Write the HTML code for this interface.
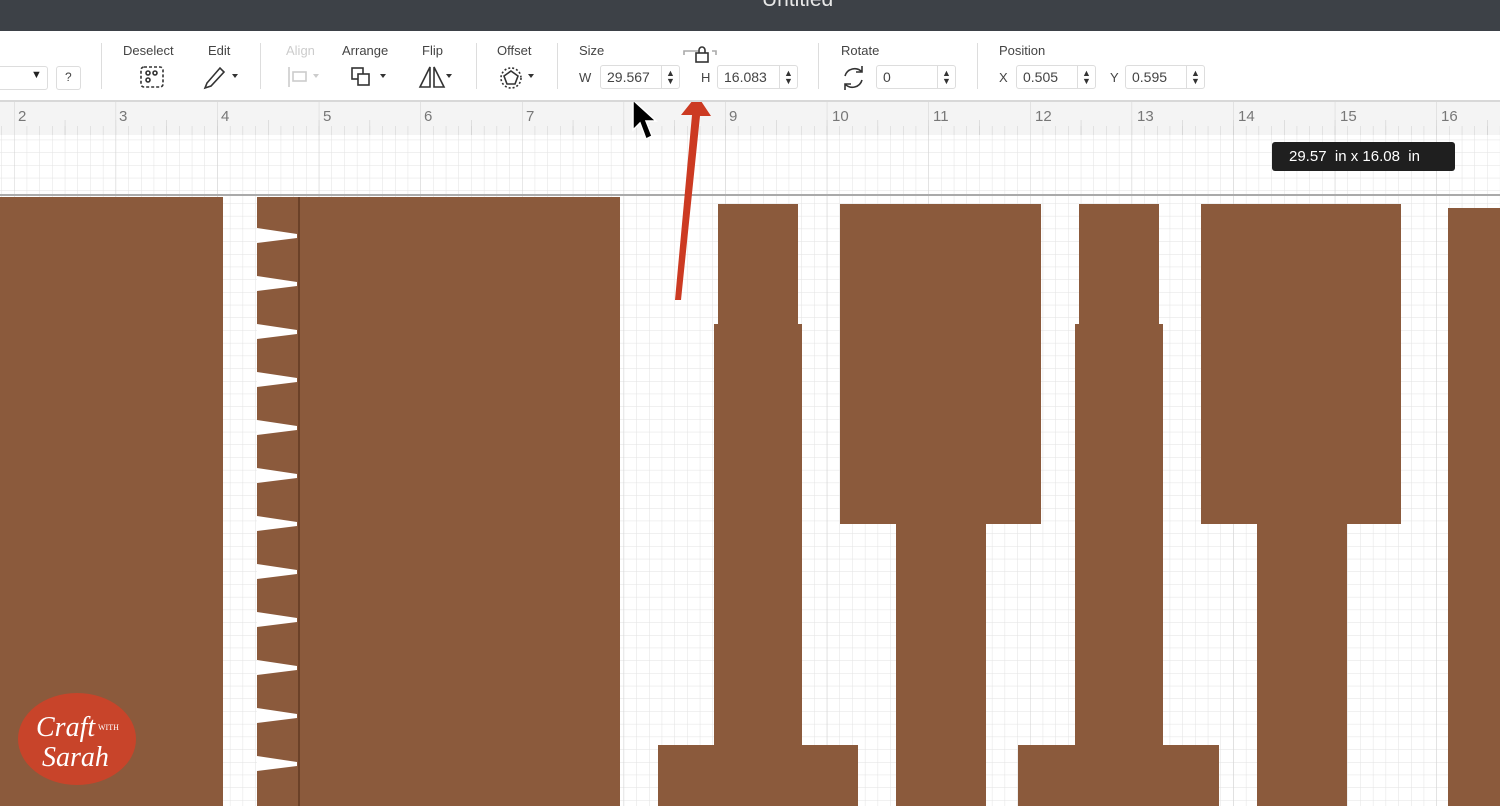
<!DOCTYPE html>
<html><head><meta charset="utf-8"><style>
*{margin:0;padding:0;box-sizing:border-box}
body{width:1500px;height:806px;overflow:hidden;position:relative;background:#fff;font-family:"Liberation Sans",sans-serif;color:#444}
.top{position:absolute;left:0;top:0;width:1500px;height:31px;background:#3d4147}
.top span{position:absolute;left:762px;top:-12px;color:#e8e8e8;font-size:21px}
.tb{position:absolute;left:0;top:31px;width:1500px;height:71px;background:#fff;border-bottom:2px solid #d8d8d8}
.lb{position:absolute;font-size:13px;color:#444}
.sep{position:absolute;top:12px;width:1px;height:46px;background:#ddd}
.inp{position:absolute;height:24px;border:1px solid #ddd;border-radius:3px;font-size:14px;color:#444;padding:3px 0 0 6px;background:#fff}
.inp i{position:absolute;right:0;top:0;width:18px;height:22px;border-left:1px solid #ddd;font-style:normal;font-size:9px;line-height:8px;text-align:center;padding-top:3px;color:#333}
.tip{position:absolute;left:1272px;top:142px;width:183px;height:29px;background:#1f1f1f;border-radius:3px;color:#fff;font-size:15px;padding:6px 0 0 17px}
</style></head><body>
<svg width="1500" height="806" style="position:absolute;left:0;top:0">
<defs>
<pattern id="g" x="14" y="0" width="12.7" height="12.7" patternUnits="userSpaceOnUse"><path d="M0 0V12.7M0 0H12.7" stroke="#e2e2e2" stroke-width="1" fill="none"/></pattern>
<pattern id="G" x="14" y="0" width="101.6" height="101.6" patternUnits="userSpaceOnUse"><path d="M0 0V101.6" stroke="#d0d0d0" stroke-width="1" fill="none"/></pattern>
<pattern id="t" x="14" y="102" width="12.7" height="33" patternUnits="userSpaceOnUse"><path d="M0 24V33" stroke="#cfcfcf" stroke-width="1" fill="none"/></pattern>
<pattern id="t2" x="14" y="102" width="50.8" height="33" patternUnits="userSpaceOnUse"><path d="M0 18V33" stroke="#c8c8c8" stroke-width="1" fill="none"/></pattern>
</defs>
<rect x="0" y="102" width="1500" height="704" fill="#fff"/>
<rect x="0" y="102" width="1500" height="33" fill="#f4f4f4"/>
<rect x="0" y="102" width="1500" height="33" fill="url(#t)"/>
<rect x="0" y="102" width="1500" height="33" fill="url(#t2)"/>
<rect x="0" y="135" width="1500" height="671" fill="url(#g)"/>
<rect x="0" y="102" width="1500" height="704" fill="url(#G)"/>
<line x1="0" y1="195" x2="1500" y2="195" stroke="#aaa" stroke-width="2"/>
<g font-size="15" fill="#777">
<text x="18" y="121">2</text><text x="119" y="121">3</text><text x="221" y="121">4</text><text x="323" y="121">5</text><text x="424" y="121">6</text><text x="526" y="121">7</text><text x="729" y="121">9</text><text x="832" y="121">10</text><text x="933" y="121">11</text><text x="1035" y="121">12</text><text x="1137" y="121">13</text><text x="1238" y="121">14</text><text x="1340" y="121">15</text><text x="1441" y="121">16</text>
</g>
<g fill="#8b5a3c">
<rect x="0" y="197" width="223" height="609"/>
<rect x="300" y="197" width="320" height="609"/>
<path d="M718 204H798V324H802V745H858V806H658V745H714V324H718Z"/>
<path d="M840 204H1041V524H986V806H896V524H840Z"/>
<path d="M1079 204H1159V324H1163V745H1219V806H1018V745H1075V324H1079Z"/>
<path d="M1201 204H1401V524H1347V806H1257V524H1201Z"/>
<rect x="1448" y="208" width="52" height="598"/>
<path d="M257 197H299V806H257Z"/>
</g>
<line x1="299" y1="197" x2="299" y2="806" stroke="#6b4128" stroke-width="2"/>
<g fill="#fff">
<path d="M257 228L297 234L297 238L257 243Z"/>
<path d="M257 276L297 282L297 286L257 291Z"/>
<path d="M257 324L297 330L297 334L257 339Z"/>
<path d="M257 372L297 378L297 382L257 387Z"/>
<path d="M257 420L297 426L297 430L257 435Z"/>
<path d="M257 468L297 474L297 478L257 483Z"/>
<path d="M257 516L297 522L297 526L257 531Z"/>
<path d="M257 564L297 570L297 574L257 579Z"/>
<path d="M257 612L297 618L297 622L257 627Z"/>
<path d="M257 660L297 666L297 670L257 675Z"/>
<path d="M257 708L297 714L297 718L257 723Z"/>
<path d="M257 756L297 762L297 766L257 771Z"/>
</g>
<path d="M675 300L681 300L700 116L711 116L697 95L681 115L692 115Z" fill="#cc3a22"/>
<path d="M633 100L633 130L640 123L646 139L652 136L646 121L656 121Z" fill="#000" stroke="#fff" stroke-width="1.5"/>
<ellipse cx="77" cy="739" rx="59" ry="46" fill="#c8442a"/>
<text x="36" y="736" fill="#fff" font-family="Liberation Serif,serif" font-style="italic" font-size="28">Craft</text>
<text x="98" y="730" fill="#fff" font-family="Liberation Serif,serif" font-size="8">WITH</text>
<text x="42" y="766" fill="#fff" font-family="Liberation Serif,serif" font-style="italic" font-size="28">Sarah</text>
</svg>
<div class="top"><span>Untitled</span></div>
<div class="tb">
<div class="inp" style="left:-5px;top:35px;width:53px"></div><span style="position:absolute;left:31px;top:38px;font-size:11px;color:#222">▼</span>
<div class="inp" style="left:56px;top:35px;width:25px;padding-left:8px;font-size:12px">?</div>
<div class="sep" style="left:101px"></div>
<span class="lb" style="left:123px;top:12px">Deselect</span>
<span class="lb" style="left:208px;top:12px">Edit</span>
<div class="sep" style="left:260px"></div>
<span class="lb" style="left:286px;top:12px;color:#ccc">Align</span>
<span class="lb" style="left:342px;top:12px">Arrange</span>
<span class="lb" style="left:422px;top:12px">Flip</span>
<div class="sep" style="left:476px"></div>
<span class="lb" style="left:497px;top:12px">Offset</span>
<div class="sep" style="left:557px"></div>
<span class="lb" style="left:579px;top:12px">Size</span>
<span class="lb" style="left:579px;top:39px">W</span>
<div class="inp" style="left:600px;top:34px;width:80px">29.567<i>▲<br>▼</i></div>
<span class="lb" style="left:701px;top:39px">H</span>
<div class="inp" style="left:717px;top:34px;width:81px">16.083<i>▲<br>▼</i></div>
<div class="sep" style="left:818px"></div>
<span class="lb" style="left:841px;top:12px">Rotate</span>
<div class="inp" style="left:876px;top:34px;width:80px">0<i>▲<br>▼</i></div>
<div class="sep" style="left:977px"></div>
<span class="lb" style="left:999px;top:12px">Position</span>
<span class="lb" style="left:999px;top:39px">X</span>
<div class="inp" style="left:1016px;top:34px;width:80px">0.505<i>▲<br>▼</i></div>
<span class="lb" style="left:1110px;top:39px">Y</span>
<div class="inp" style="left:1125px;top:34px;width:80px">0.595<i>▲<br>▼</i></div>
<svg width="1500" height="71" style="position:absolute;left:0;top:0" fill="none" stroke="#333" stroke-width="1.6">
<rect x="141" y="36" width="22" height="20" rx="3" stroke-dasharray="3 2"/>
<circle cx="148" cy="42" r="2"/><circle cx="155" cy="42" r="2"/><circle cx="148" cy="49" r="2"/>
<path d="M208 56L205 57L207 52L220 37L224 41L211 55Z"/>
<path d="M232 43h6l-3 4z" fill="#333" stroke="none"/>
<path d="M289 36V56" stroke="#ccc"/><rect x="293" y="41" width="13" height="9" stroke="#ccc"/><path d="M313 43h6l-3 4z" fill="#ccc" stroke="none"/>
<rect x="352" y="37" width="11" height="11"/><rect x="358" y="43" width="11" height="11" fill="#fff"/>
<path d="M380 43h6l-3 4z" fill="#333" stroke="none"/>
<path d="M430 36L420 56H430Z M434 36L444 56H434Z"/>
<path d="M446 43h6l-3 4z" fill="#333" stroke="none"/>
<circle cx="511" cy="47" r="10" stroke-dasharray="2 2"/><path d="M511 40L518 45L515 53H507L504 45Z"/>
<path d="M528 43h6l-3 4z" fill="#333" stroke="none"/>
<path d="M684 24V20h14M712 20h4v4" stroke="#aaa"/>
<rect x="696" y="22" width="12" height="9" fill="#fff"/><path d="M699 22v-3a3 3 0 0 1 6 0v3"/>
<path d="M862 41a10 10 0 0 0-17 4M845 53a10 10 0 0 0 17-4M862 35v6h-6M845 59v-6h6"/>
</svg>
</div>
<div class="tip">29.57&nbsp; in x 16.08&nbsp; in</div>
</body></html>
